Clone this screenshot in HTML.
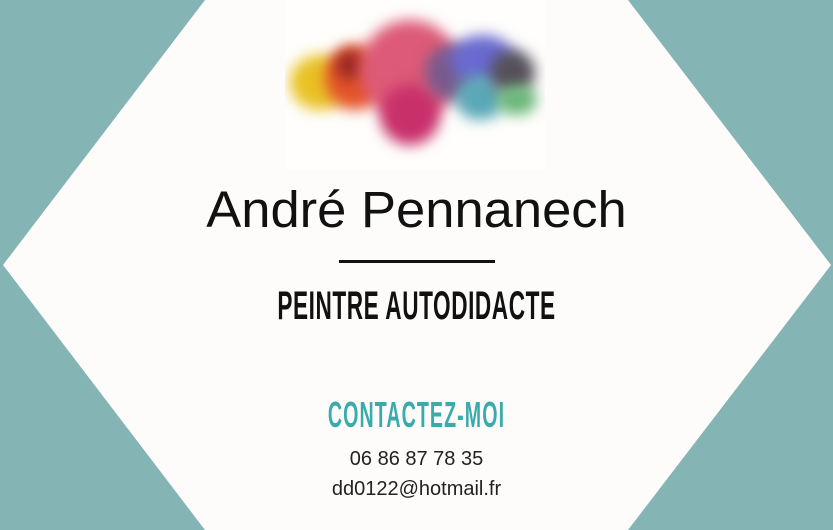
<!DOCTYPE html>
<html><head><meta charset="utf-8"><style>
body{margin:0;width:833px;height:530px;overflow:hidden;background:#84b4b4;position:relative;font-family:"Liberation Sans",sans-serif}
.hex{position:absolute;left:0;top:0}
.t{position:absolute;left:0;width:833px;text-align:center;white-space:nowrap}
.blob{position:absolute;border-radius:50%;filter:blur(7px)}
</style></head><body>
<svg class="hex" width="833" height="530"><polygon points="205,0 628,0 831,265 628,530 205,530 3,265" fill="#fdfcfa"/></svg>
<div style="position:absolute;left:285px;top:0;width:260px;height:170px;background:#fffefc;overflow:hidden">
<div class="blob" style="left:5px;top:55px;width:60px;height:55px;background:#e9c224"></div>
<div class="blob" style="left:40px;top:45px;width:60px;height:65px;background:#e4542a"></div>
<div class="blob" style="left:50px;top:50px;width:30px;height:30px;background:#9c2a22"></div>
<div class="blob" style="left:75px;top:20px;width:100px;height:100px;background:#dd5a78"></div>
<div class="blob" style="left:95px;top:85px;width:60px;height:60px;background:#c8306a"></div>
<div class="blob" style="left:140px;top:45px;width:55px;height:55px;background:#7a5a8c"></div>
<div class="blob" style="left:165px;top:35px;width:65px;height:50px;background:#6a6ad0"></div>
<div class="blob" style="left:170px;top:75px;width:50px;height:45px;background:#5aa8b8"></div>
<div class="blob" style="left:205px;top:50px;width:45px;height:45px;background:#55505a"></div>
<div class="blob" style="left:212px;top:85px;width:40px;height:30px;background:#6ab878"></div>
</div>
<div class="t" style="top:180px;font-size:51px;color:#111;transform:scaleX(1.03)">André Pennanech</div>
<div style="position:absolute;left:339px;top:260px;width:156px;height:3px;background:#111"></div>
<div class="t" style="top:284px;font-size:40px;font-weight:bold;color:#111;transform:scaleX(0.565);letter-spacing:1px">PEINTRE AUTODIDACTE</div>
<div class="t" style="top:394px;font-size:36px;font-weight:bold;color:#3aabab;transform:scaleX(0.545);letter-spacing:2px">CONTACTEZ-MOI</div>
<div class="t" style="top:448px;font-size:20px;color:#222">06 86 87 78 35</div>
<div class="t" style="top:478px;font-size:20px;color:#222">dd0122@hotmail.fr</div>
</body></html>
